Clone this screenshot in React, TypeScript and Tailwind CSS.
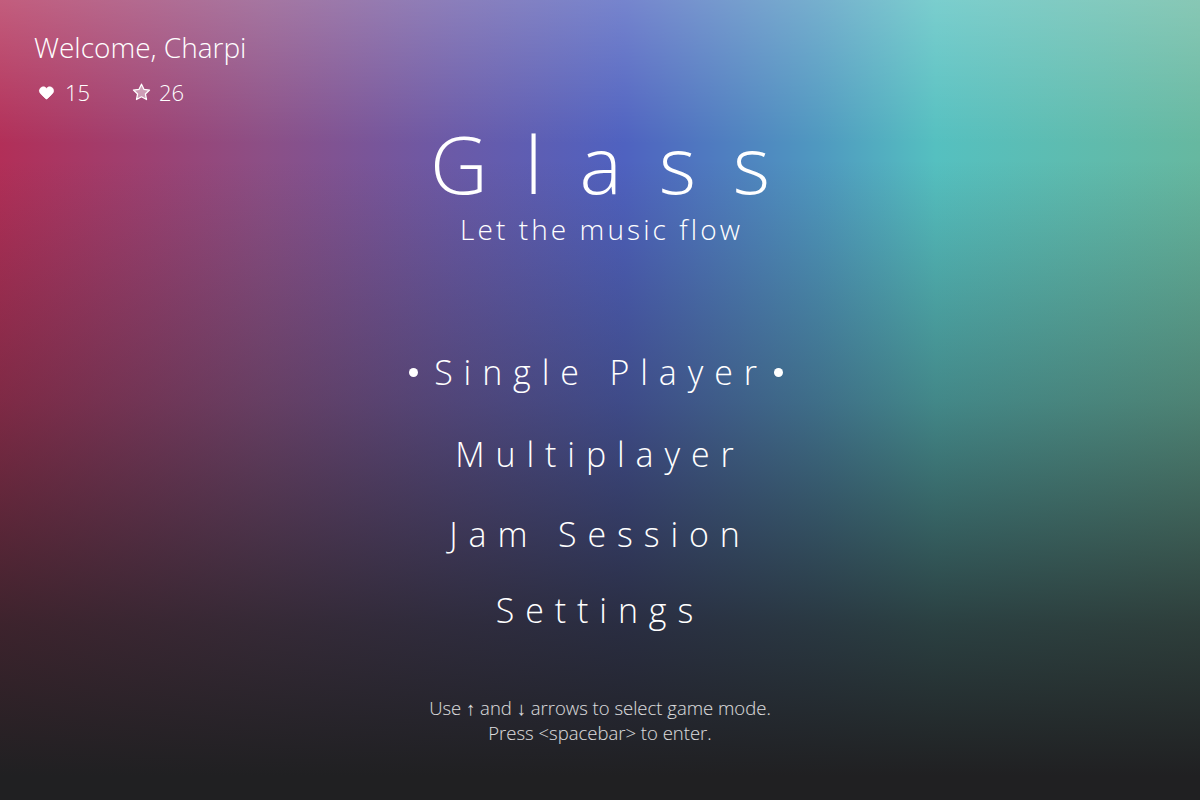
import { Heart } from "lucide-react";

const menuItems = [
  { label: "Single Player", gap: "mt-0" },
  { label: "Multiplayer", gap: "mt-[40px]" },
  { label: "Jam Session", gap: "mt-[38px]" },
  { label: "Settings", gap: "mt-[34px]" },
];

function StarIcon() {
  return (
    <svg width="19" height="18" viewBox="0 0 24 23" className="shrink-0">
      <path
        d="M12 1.5l3.1 6.6 7.2.9-5.3 5 1.4 7.1L12 17.6l-6.4 3.5 1.4-7.1-5.3-5 7.2-.9z"
        fill="rgba(255,255,255,0.45)"
        stroke="white"
        strokeWidth="1.6"
        strokeLinejoin="round"
      />
    </svg>
  );
}

function Dot() {
  return <span className="inline-block shrink-0 w-[9px] h-[9px] rounded-full bg-white" />;
}

export default function App() {
  const selected = 0;

  return (
    <main className="relative flex flex-col items-center w-[1200px] h-[800px] overflow-hidden text-white font-['Open_Sans','Segoe_UI',sans-serif] font-light bg-[linear-gradient(to_bottom,rgba(255,255,255,0.22)_0%,rgba(255,255,255,0)_18%),linear-gradient(to_bottom,rgba(32,32,34,0)_20%,rgba(32,32,34,0.35)_50%,rgba(32,32,34,0.8)_78%,#202022_97%),linear-gradient(to_right,#b22f58_0%,#8c4f86_22%,#6a5aa8_38%,#4f62c0_52%,#4f98c0_68%,#55c0c0_78%,#66b8a0_100%)]">
      <div className="absolute top-[29px] left-[34px] flex flex-col">
        <p className="text-[28px] leading-[36px]">Welcome, Charpi</p>
        <div className="flex items-center mt-[13px] text-[22px] leading-[28px]">
          <Heart className="w-[17px] h-[17px] ml-[4px]" fill="white" strokeWidth={1} />
          <span className="ml-[10px] w-[67px]">15</span>
          <StarIcon />
          <span className="ml-[8px]">26</span>
        </div>
      </div>

      <h1 className="mt-[118px] pl-[0.46em] text-[80px] leading-[90px] tracking-[0.46em]">Glass</h1>
      <p className="mt-[3px] pl-[0.11em] text-[28px] leading-[36px] tracking-[0.11em]">Let the music flow</p>

      <ul className="mt-[104px] flex flex-col items-center">
        {menuItems.map((item, i) => (
          <li key={item.label} className={`${item.gap} text-[34px] leading-[42px] tracking-[0.32em]`}>
            {i === selected ? (
              <span className="flex items-center pr-[8px]">
                <Dot />
                <span className="ml-[16px] mr-[6px]">{item.label}</span>
                <Dot />
              </span>
            ) : (
              <span>{item.label}</span>
            )}
          </li>
        ))}
      </ul>

      <div className="mt-[64px] flex flex-col items-center text-[18.5px] leading-[25px] text-white/85">
        <p>Use ↑ and ↓ arrows to select game mode.</p>
        <p>Press &lt;spacebar&gt; to enter.</p>
      </div>
    </main>
  );
}
